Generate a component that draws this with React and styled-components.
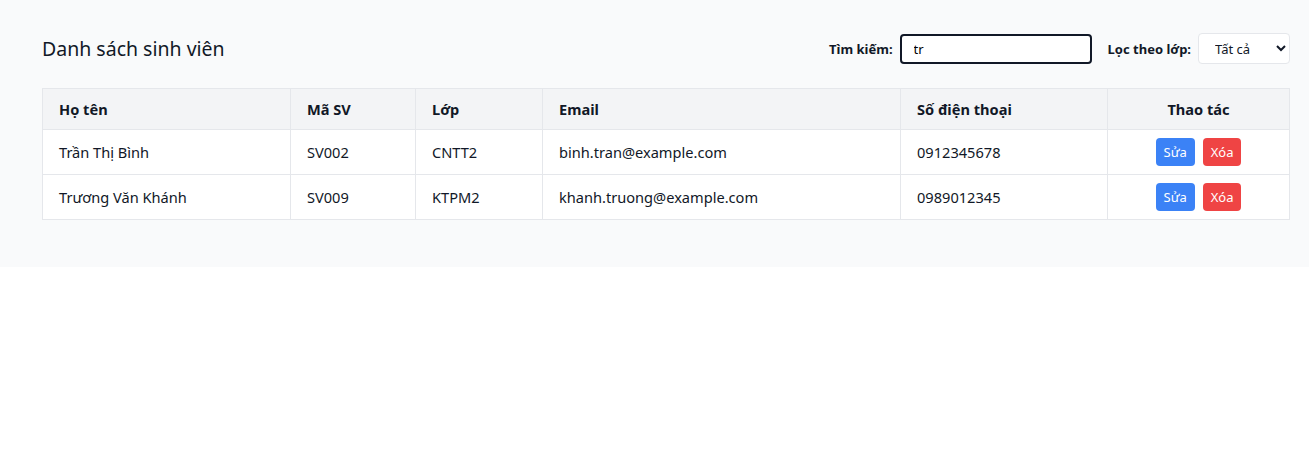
import styled, { createGlobalStyle } from 'styled-components';

const GlobalStyle = createGlobalStyle`
  body {
    margin: 0;
    background: #ffffff;
    font-family: 'Noto Sans', 'Open Sans', sans-serif;
    color: #111827;
  }
`;

const Page = styled.div`
  background: #f9fafb;
  padding: 33px 19px 47px 42px;
`;

const TopBar = styled.div`
  display: flex;
  align-items: center;
  justify-content: space-between;
  margin-bottom: 24px;
`;

const Title = styled.h2`
  margin: 0;
  font-size: 19.5px;
  font-weight: 400;
  color: #111827;
`;

const Filters = styled.div`
  display: flex;
  align-items: center;
`;

const Label = styled.label`
  font-size: 13px;
  font-weight: 700;
  color: #111827;
  margin-right: 7px;
  margin-left: ${({ $gap }) => $gap || 0}px;
`;

const SearchInput = styled.input`
  box-sizing: border-box;
  width: 192px;
  height: 30px;
  border: 2px solid #111827;
  border-radius: 4px;
  padding: 0 12px;
  font-family: inherit;
  font-size: 13px;
  outline: none;
  background: #fff;
`;

const Select = styled.select`
  box-sizing: border-box;
  width: 92px;
  height: 31px;
  border: 1px solid #e5e7eb;
  border-radius: 4px;
  padding: 0 6px 0 12px;
  font-family: inherit;
  font-size: 13px;
  color: #111827;
  background: #fff;
`;

const Table = styled.table`
  width: 100%;
  border-collapse: collapse;
  table-layout: fixed;
  background: #fff;
  font-size: 14.6px;
`;

const Th = styled.th`
  width: ${({ $w }) => $w}px;
  height: 41px;
  box-sizing: border-box;
  background: #f3f4f6;
  border: 1px solid #e5e7eb;
  padding: 0 16px;
  text-align: ${({ $center }) => ($center ? 'center' : 'left')};
  font-weight: 700;
  color: #111827;
`;

const Td = styled.td`
  height: 45px;
  box-sizing: border-box;
  border: 1px solid #e5e7eb;
  padding: 0 16px;
  text-align: ${({ $center }) => ($center ? 'center' : 'left')};
  color: #111827;
`;

const Actions = styled.div`
  display: flex;
  justify-content: center;
  gap: 8px;
`;

const ActionButton = styled.button`
  height: 28px;
  padding: 0 8px;
  border: none;
  border-radius: 4px;
  font-family: inherit;
  font-size: 13px;
  color: #fff;
  background: ${({ $danger }) => ($danger ? '#ef4444' : '#3b82f6')};
  cursor: pointer;
`;

const students = [
  { name: 'Trần Thị Bình', id: 'SV002', cls: 'CNTT2', email: 'binh.tran@example.com', phone: '0912345678' },
  { name: 'Trương Văn Khánh', id: 'SV009', cls: 'KTPM2', email: 'khanh.truong@example.com', phone: '0989012345' },
];

export default function App() {
  return (
    <>
      <GlobalStyle />
      <Page>
        <TopBar>
          <Title>Danh sách sinh viên</Title>
          <Filters>
            <Label>Tìm kiếm:</Label>
            <SearchInput defaultValue="tr" />
            <Label $gap={16}>Lọc theo lớp:</Label>
            <Select defaultValue="all">
              <option value="all">Tất cả</option>
              <option value="CNTT2">CNTT2</option>
              <option value="KTPM2">KTPM2</option>
            </Select>
          </Filters>
        </TopBar>
        <Table>
          <thead>
            <tr>
              <Th $w={248}>Họ tên</Th>
              <Th $w={125}>Mã SV</Th>
              <Th $w={127}>Lớp</Th>
              <Th $w={358}>Email</Th>
              <Th $w={207}>Số điện thoại</Th>
              <Th $center>Thao tác</Th>
            </tr>
          </thead>
          <tbody>
            {students.map((s) => (
              <tr key={s.id}>
                <Td>{s.name}</Td>
                <Td>{s.id}</Td>
                <Td>{s.cls}</Td>
                <Td>{s.email}</Td>
                <Td>{s.phone}</Td>
                <Td $center>
                  <Actions>
                    <ActionButton>Sửa</ActionButton>
                    <ActionButton $danger>Xóa</ActionButton>
                  </Actions>
                </Td>
              </tr>
            ))}
          </tbody>
        </Table>
      </Page>
    </>
  );
}
